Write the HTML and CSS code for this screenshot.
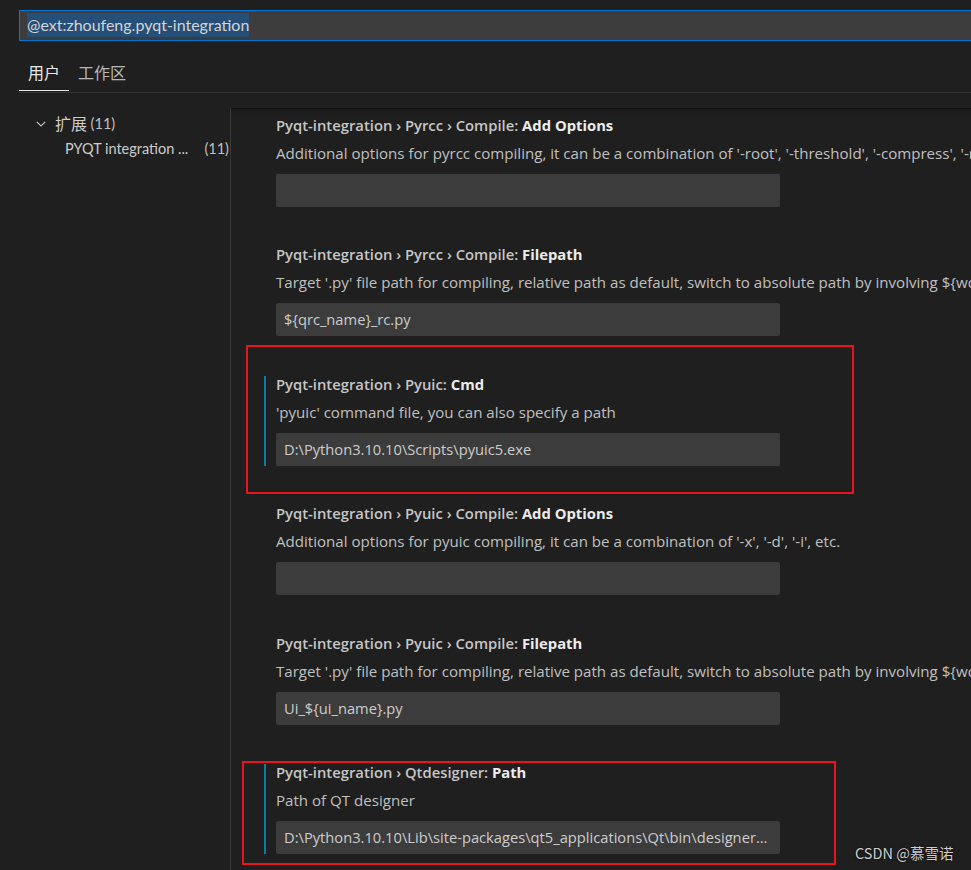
FILE: index.html
```html
<!DOCTYPE html>
<html lang="zh-CN">
<head>
<meta charset="utf-8">
<title>Settings</title>
<link rel="stylesheet" href="styles.css">
</head>
<body>
<div class="page">
  <div class="search"><span class="sel">@ext:zhoufeng.pyqt-integration</span></div>
  <div class="tabs">
    <div class="tab active"><span class="cjk">用户</span></div>
    <div class="tab"><span class="cjk">工作区</span></div>
  </div>
  <div class="main">
    <nav class="toc">
      <div class="toc-row group">
        <svg class="chev" width="10" height="10" viewBox="0 0 10 10"><path d="M0.8 2.8 L5 7 L9.2 2.8" fill="none" stroke="#c5c5c5" stroke-width="1.1"/></svg>
        <span class="cjk">扩展</span>&nbsp;<span class="count">(11)</span>
      </div>
      <div class="toc-row sub">
        <span>PYQT integration ...</span><span class="count">(11)</span>
      </div>
    </nav>
    <section class="pane">
      <div class="setting">
        <div class="title">Pyqt-integration › Pyrcc › Compile: <b>Add Options</b></div>
        <div class="desc">Additional options for pyrcc compiling, it can be a combination of '-root', '-threshold', '-compress', '-no-compress', '-binary', etc.</div>
        <div class="input"></div>
      </div>
      <div class="setting">
        <div class="title">Pyqt-integration › Pyrcc › Compile: <b>Filepath</b></div>
        <div class="desc">Target '.py' file path for compiling, relative path as default, switch to absolute path by involving ${workspace}</div>
        <div class="input">${qrc_name}_rc.py</div>
      </div>
      <div class="setting modified">
        <div class="title">Pyqt-integration › Pyuic: <b>Cmd</b></div>
        <div class="desc">'pyuic' command file, you can also specify a path</div>
        <div class="input">D:\Python3.10.10\Scripts\pyuic5.exe</div>
      </div>
      <div class="setting">
        <div class="title">Pyqt-integration › Pyuic › Compile: <b>Add Options</b></div>
        <div class="desc">Additional options for pyuic compiling, it can be a combination of '-x', '-d', '-i', etc.</div>
        <div class="input"></div>
      </div>
      <div class="setting">
        <div class="title">Pyqt-integration › Pyuic › Compile: <b>Filepath</b></div>
        <div class="desc">Target '.py' file path for compiling, relative path as default, switch to absolute path by involving ${workspace}</div>
        <div class="input">Ui_${ui_name}.py</div>
      </div>
      <div class="setting modified">
        <div class="title">Pyqt-integration › Qtdesigner: <b>Path</b></div>
        <div class="desc">Path of QT designer</div>
        <div class="input">D:\Python3.10.10\Lib\site-packages\qt5_applications\Qt\bin\designer.exe</div>
      </div>
    </section>
  </div>
  <div class="mark mark-cmd"></div>
  <div class="mark mark-path"></div>
  <div class="watermark">CSDN @慕雪诺</div>
</div>
</body>
</html>
```
FILE: styles.css
```css
html, body {
  margin: 0;
  padding: 0;
  background: #1f1f1f;
  overflow: hidden;
}
body {
  width: 971px;
  height: 870px;
  font-family: Lato, "Liberation Sans", "Noto Sans CJK SC", sans-serif;
  font-size: 14px;
  color: #cccccc;
}
.page {
  position: relative;
  width: 971px;
  height: 870px;
  overflow: hidden;
}
.cjk {
  font-family: "Noto Sans CJK SC", sans-serif;
  font-size: 16px;
}
.search {
  margin: 10px 0 0 19px;
  width: 980px;
  height: 31px;
  box-sizing: border-box;
  border: 1px solid #0078d4;
  border-right: none;
  background: #3c3c3c;
  padding: 2px 0 0 7px;
}
.sel {
  display: inline-block;
  height: 24px;
  line-height: 24px;
  background: #264f78;
  color: #d4d4d4;
  font-size: 16px;
  padding: 0;
}
.tabs {
  margin-left: 19px;
  height: 51px;
  display: flex;
  border-bottom: 1px solid #353535;
}
.tab {
  height: 50px;
  box-sizing: border-box;
  padding: 13px 9px 0;
  display: flex;
  align-items: center;
  border-bottom: 1px solid transparent;
  color: #b8b8b8;
}
.tab.active {
  border-bottom-color: #e7e7e7;
  color: #e7e7e7;
}
.main {
  display: flex;
  height: 777px;
}
.toc {
  width: 230px;
  flex: none;
  padding-top: 18px;
  box-sizing: border-box;
}
.toc-row {
  height: 25px;
  line-height: 25px;
  display: flex;
  align-items: center;
  white-space: nowrap;
}
.toc-row.group {
  padding-left: 36px;
}
.chev {
  margin-right: 9px;
  flex: none;
}
.toc-row.sub {
  padding-left: 65px;
  padding-right: 1px;
  justify-content: space-between;
  font-size: 14.5px;
}
.count {
  color: #c0c0c0;
  font-size: 14.5px;
}
.pane {
  flex: 1;
  margin-top: 15px;
  border-left: 1px solid #3a3a3a;
  padding-top: 9px;
  box-shadow: inset 0 6px 5px -6px #000000;
  overflow: hidden;
  font-family: "Open Sans", Lato, sans-serif;
}
.setting {
  margin-left: 33px;
  margin-bottom: 39.4px;
  border-left: 2px solid transparent;
  padding-left: 10px;
}
.setting.modified {
  border-left-color: #0c7d9d;
}
.title {
  height: 16px;
  line-height: 16px;
  font-weight: 600;
  color: #c6c6c6;
  white-space: nowrap;
  font-size: 14.8px;
}
.title b {
  font-weight: 700;
  color: #ececec;
}
.desc {
  margin-top: 10px;
  height: 20px;
  line-height: 20px;
  color: #c0c0c0;
  white-space: nowrap;
  font-size: 15.1px;
}
.input {
  margin-top: 11px;
  width: 504px;
  height: 33px;
  box-sizing: border-box;
  line-height: 33px;
  padding: 0 11px 0 8px;
  background: #3c3c3c;
  border-radius: 2px;
  color: #cccccc;
  white-space: nowrap;
  overflow: hidden;
  text-overflow: ellipsis;
  font-size: 14.7px;
}
.mark {
  position: absolute;
  border: 2px solid #e8141f;
  box-sizing: border-box;
}
.mark-cmd {
  left: 246px;
  top: 345px;
  width: 608px;
  height: 149px;
}
.mark-path {
  left: 242px;
  top: 761px;
  width: 594px;
  height: 104px;
}
.watermark {
  position: absolute;
  left: 855px;
  top: 843px;
  font-family: "Noto Sans CJK SC", sans-serif;
  font-size: 14.5px;
  line-height: 20px;
  color: #cfcfcf;
  text-shadow: 0 0 2px #000;
}
```
